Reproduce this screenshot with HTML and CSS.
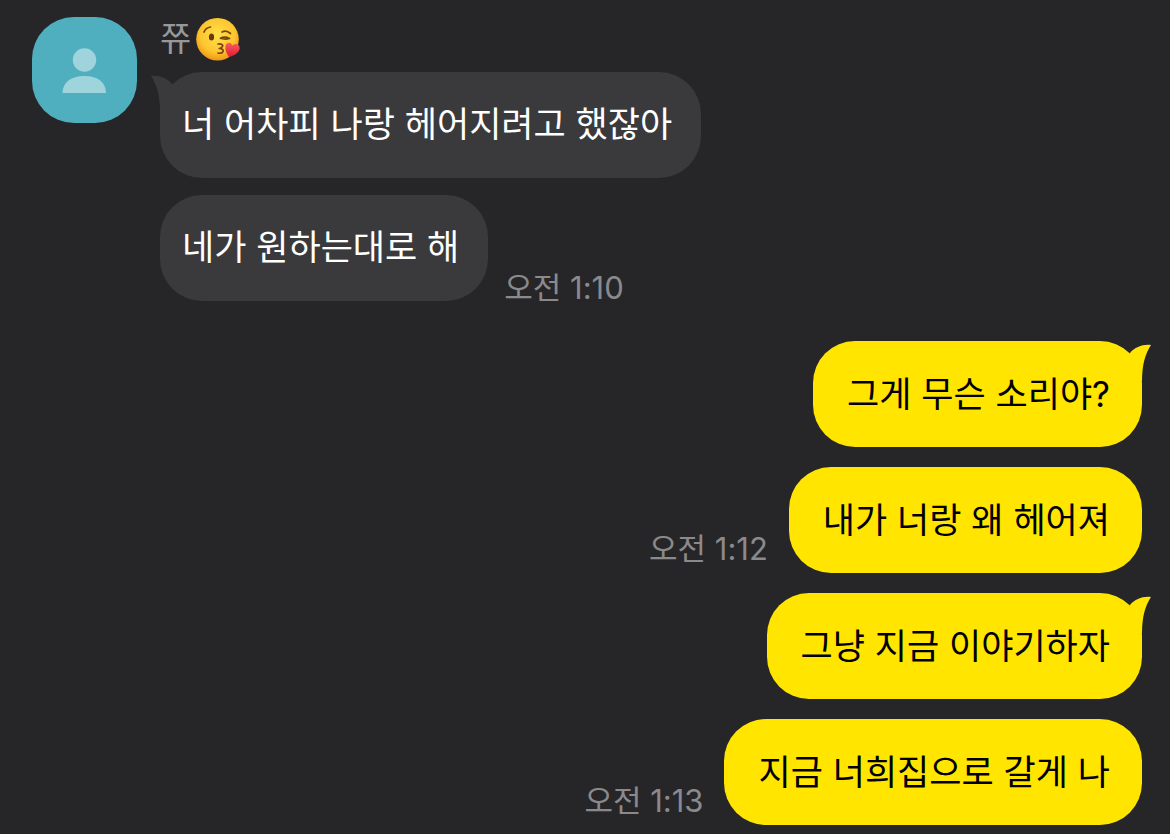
FILE: index.html
```html
<!DOCTYPE html>
<html lang="ko">
<head>
    <meta charset="UTF-8">
    <meta name="viewport" content="width=device-width, initial-scale=1.0">
    <title>쮸</title>
    <link rel="stylesheet" href="styles.css">
</head>
<body>
    <main class="chat">
        <section class="received">
            <div class="avatar">
                <svg viewBox="0 0 105 106" aria-hidden="true">
                    <circle cx="52.5" cy="43" r="11.7"/>
                    <path d="M30.5 76C30.5 65.5 39 59 52.5 59S74 65.5 74 76Z"/>
                </svg>
            </div>
            <div class="thread">
                <div class="name">
                    <span>쮸</span>
                    <svg class="emoji" viewBox="0 0 44 44" role="img" aria-label="키스하는 얼굴">
                        <defs>
                            <radialGradient id="face" cx="0.5" cy="0.4" r="0.62">
                                <stop offset="0" stop-color="#ffe04a"/>
                                <stop offset="0.65" stop-color="#fdc630"/>
                                <stop offset="1" stop-color="#ee8f12"/>
                            </radialGradient>
                            <linearGradient id="heart" x1="0" y1="0" x2="0" y2="1">
                                <stop offset="0" stop-color="#ff5a5f"/>
                                <stop offset="1" stop-color="#d81f35"/>
                            </linearGradient>
                        </defs>
                        <circle cx="21.5" cy="22.3" r="21.3" fill="url(#face)"/>
                        <ellipse cx="15.5" cy="20" rx="2.6" ry="3.6" fill="#6b3a08"/>
                        <g fill="none" stroke="#7a430a" stroke-width="1.7" stroke-linecap="round" stroke-linejoin="round">
                            <path d="M8 15C9 12.5 11.5 10.5 14.5 10"/>
                            <path d="M26 15C28.5 13.8 32 14.3 34.5 16.5"/>
                            <path d="M24.5 21.3C27.5 19.5 30.5 20 33.5 21.5C30.5 22.3 27.5 22.3 24.5 21.3"/>
                            <path d="M22 27C25 26.5 27.5 27.7 26.5 29.5C26 30.7 24.5 31.2 23.3 31.5C25.5 31.5 28 32.5 27 34.5C26.2 36.1 24 36.5 22 36"/>
                        </g>
                        <path d="M33 40C30.5 36.5 28.8 33 29.5 29C30.5 24.5 35.5 24.7 36.3 28.5C39.5 25.3 44 27.3 43.7 31.5C43 36 38 38.7 33 40Z" fill="url(#heart)"/>
                    </svg>
                </div>
                <div class="row">
                    <p class="bubble">너 어차피 나랑 헤어지려고 했잖아
                        <svg class="tail" viewBox="0 0 24 40" aria-hidden="true">
                            <path d="M0 4C8 3 16 6 21 12L24 40H9C9 24 6 13 0 4Z"/>
                        </svg>
                    </p>
                </div>
                <div class="row">
                    <p class="bubble">네가 원하는대로 해</p>
                    <time datetime="01:10">오전 1:10</time>
                </div>
            </div>
        </section>

        <section class="sent">
            <div class="row">
                <p class="bubble">그게 무슨 소리야?
                    <svg class="tail" viewBox="0 0 24 40" aria-hidden="true">
                        <path d="M0 4C8 3 16 6 21 12L24 40H9C9 24 6 13 0 4Z"/>
                    </svg>
                </p>
            </div>
            <div class="row">
                <time datetime="01:12">오전 1:12</time>
                <p class="bubble">내가 너랑 왜 헤어져</p>
            </div>
            <div class="row">
                <p class="bubble">그냥 지금 이야기하자
                    <svg class="tail" viewBox="0 0 24 40" aria-hidden="true">
                        <path d="M0 4C8 3 16 6 21 12L24 40H9C9 24 6 13 0 4Z"/>
                    </svg>
                </p>
            </div>
            <div class="row">
                <time datetime="01:13">오전 1:13</time>
                <p class="bubble">지금 너희집으로 갈게 나</p>
            </div>
        </section>
    </main>
</body>
</html>
```
FILE: styles.css
```css
* {
    box-sizing: border-box;
}
body {
    margin: 0;
    background-color: #262628;
    font-family: Inter, "Noto Sans CJK KR", sans-serif;
}
.chat {
    display: flex;
    flex-direction: column;
    gap: 40px;
    padding: 17px 28px 8px 32px;
}
.received {
    display: flex;
    align-items: flex-start;
    gap: 23px;
}
.avatar {
    flex: none;
    width: 105px;
    height: 106px;
    border-radius: 42px;
    background-color: #50afbf;
    overflow: hidden;
}
.avatar svg {
    display: block;
    fill: #9fd4dc;
}
.thread {
    display: flex;
    flex-direction: column;
    gap: 17px;
}
.name {
    display: flex;
    align-items: center;
    gap: 5px;
    height: 44px;
    margin-bottom: -6px;
    color: #98989a;
    font-size: 34px;
    line-height: 44px;
}
.emoji {
    width: 44px;
    height: 44px;
}
.row {
    display: flex;
    align-items: flex-end;
    gap: 16px;
}
.bubble {
    position: relative;
    margin: 0;
    padding: 31px 29px 33px 22px;
    border-radius: 42px;
    background-color: #3a3a3c;
    color: #fff;
    font-size: 35px;
    line-height: 42px;
}
.tail {
    position: absolute;
    top: 0;
    left: -9px;
    width: 24px;
    height: 40px;
    fill: #3a3a3c;
}
time {
    color: #8a8a8c;
    font-size: 31px;
    line-height: 26px;
}
.sent {
    display: flex;
    flex-direction: column;
    gap: 20px;
}
.sent .row {
    justify-content: flex-end;
    gap: 21px;
}
.sent .bubble {
    padding: 32px 32px 32px 34px;
    background-color: #ffe500;
    color: #000;
}
.sent .tail {
    right: -9px;
    left: auto;
    fill: #ffe500;
    transform: scaleX(-1);
}
.sent time {
    padding-bottom: 11px;
}
```
